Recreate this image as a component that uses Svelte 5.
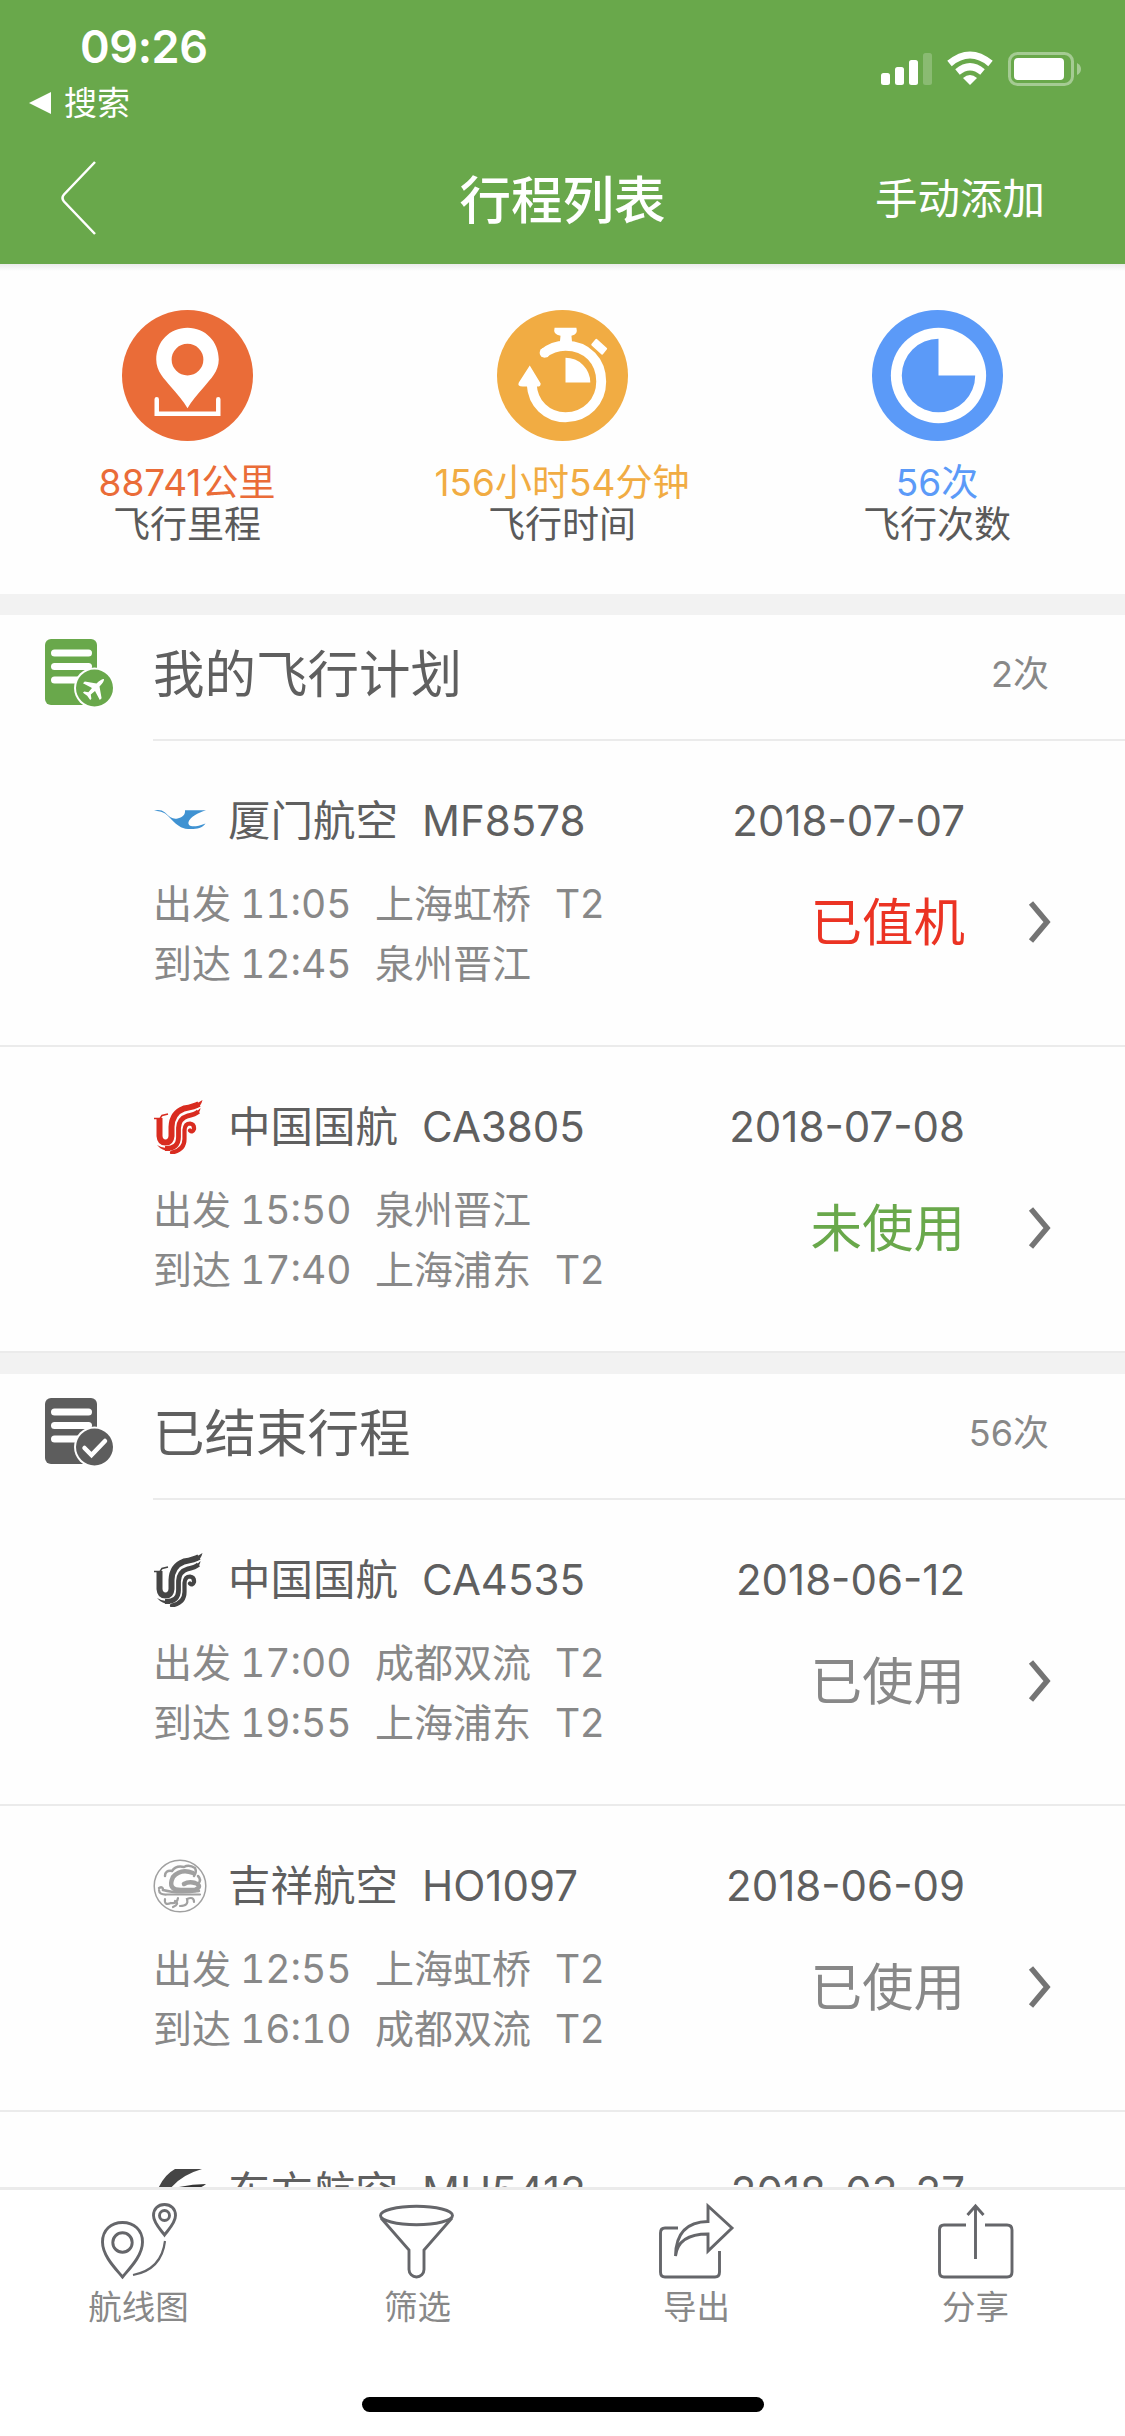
<script>
  const stats = [
    { kind: 'distance', value: '88741公里', label: '飞行里程' },
    { kind: 'time', value: '156小时54分钟', label: '飞行时间' },
    { kind: 'count', value: '56次', label: '飞行次数' }
  ];

  const sections = [
    {
      kind: 'plan',
      title: '我的飞行计划',
      count: '2次',
      flights: [
        {
          logo: 'xiamen', airline: '厦门航空', number: 'MF8578', date: '2018-07-07',
          from: ['11:05', '上海虹桥', 'T2'], to: ['12:45', '泉州晋江', ''],
          status: '已值机', tone: 'red'
        },
        {
          logo: 'airchina', airline: '中国国航', number: 'CA3805', date: '2018-07-08',
          from: ['15:50', '泉州晋江', ''], to: ['17:40', '上海浦东', 'T2'],
          status: '未使用', tone: 'green'
        }
      ]
    },
    {
      kind: 'done',
      title: '已结束行程',
      count: '56次',
      flights: [
        {
          logo: 'airchina', airline: '中国国航', number: 'CA4535', date: '2018-06-12',
          from: ['17:00', '成都双流', 'T2'], to: ['19:55', '上海浦东', 'T2'],
          status: '已使用', tone: 'grey'
        },
        {
          logo: 'juneyao', airline: '吉祥航空', number: 'HO1097', date: '2018-06-09',
          from: ['12:55', '上海虹桥', 'T2'], to: ['16:10', '成都双流', 'T2'],
          status: '已使用', tone: 'grey'
        },
        {
          logo: 'eastern', airline: '东方航空', number: 'MU5412', date: '2018-03-27',
          from: ['', '', ''], to: ['', '', ''],
          status: '', tone: 'grey'
        }
      ]
    }
  ];

  const tabs = [
    { kind: 'route', label: '航线图' },
    { kind: 'filter', label: '筛选' },
    { kind: 'export', label: '导出' },
    { kind: 'share', label: '分享' }
  ];
</script>

<div class="screen">
  <header>
    <div class="status">
      <div class="status-left">
        <div class="clock">09:26</div>
        <div class="return">
          <svg width="22" height="22" viewBox="0 0 22 22"><path d="M0 11 22 0V22Z" fill="#fff" /></svg>
          <span>搜索</span>
        </div>
      </div>
      <svg class="indicators" width="204" height="40" viewBox="0 0 204 40">
        <g fill="#fff">
          <rect x="1" y="23" width="9" height="12" rx="2.5" />
          <rect x="15" y="17" width="9" height="18" rx="2.5" />
          <rect x="29" y="10" width="9" height="25" rx="2.5" />
          <rect x="43" y="3" width="9" height="32" rx="2.5" opacity=".22" />
          <path d="M90 35 83 28Q90 22 97 28Z" />
          <rect x="134" y="8" width="50" height="22" rx="4" />
        </g>
        <g fill="none" stroke="#fff" stroke-width="7">
          <path d="M69.500 13.500Q90 -3.500 110.500 13.500" />
          <path d="M77.500 22Q90 11.500 102.500 22" />
        </g>
        <rect x="129.500" y="3.500" width="63" height="31" rx="8" fill="none" stroke="#fff" stroke-width="3" opacity=".4" />
        <path d="M197 13Q201 15 201 19T197 25Z" fill="#fff" opacity=".4" />
      </svg>
    </div>
    <nav>
      <svg class="back" width="40" height="76" viewBox="0 0 40 76">
        <path d="M36 2 5 34.500Q2 38 5 41.500L36 74" fill="none" stroke="#fff" stroke-width="2.500" />
      </svg>
      <h1>行程列表</h1>
      <span class="add">手动添加</span>
    </nav>
  </header>

  <main>
    <div class="stats">
      {#each stats as stat}
        <div class="stat {stat.kind}">
          <svg width="131" height="131" viewBox="0 0 132 132">
            <circle cx="66" cy="66" r="66" fill="currentColor" />
            {#if stat.kind === 'distance'}
              <path fill="#fff" fill-rule="evenodd" d="M66 18C48 18 34.500 32 34.500 50C34.500 62 43 70 49 77C56 85 62 92 66 99C70 92 76 85 83 77C89 70 97.500 62 97.500 50C97.500 32 84 18 66 18ZM66 34A16 16 0 1 1 66 66A16 16 0 1 1 66 34Z" />
              <path d="M35 90V104.500H97V90" fill="none" stroke="#fff" stroke-width="4.500" stroke-linecap="round" />
            {:else if stat.kind === 'time'}
              <path d="M35 75C36 94 50 108 69 108C90 108 105 92 105 72C105 52 91 36 69 36Q56 36 47 44" fill="none" stroke="#fff" stroke-width="10" />
              <circle cx="48" cy="43" r="5" fill="#fff" />
              <path d="M69 48A25 25 0 0 1 94 73H69Z" fill="#fff" />
              <path d="M58 18H80Q82 25 75 26L76 36H63L64 26Q56 25 58 18Z" fill="#fff" />
              <path d="M33 56 44 74Q44 78 39 77H26Q20 77 22 73Z" fill="#fff" />
              <path d="M100 30 110 39 106 44 96 35Z" fill="#fff" stroke="#fff" stroke-width="2" stroke-linejoin="round" />
            {:else}
              <circle cx="67" cy="66" r="48" fill="#fff" />
              <path d="M67 66H104A37 37 0 1 1 67 29Z" fill="currentColor" />
            {/if}
          </svg>
          <div class="value">{stat.value}</div>
          <div class="label">{stat.label}</div>
        </div>
      {/each}
    </div>

    {#each sections as section}
      <section class={section.kind}>
        <div class="section-head">
          <svg class="doc" width="70" height="68" viewBox="0 0 70 68">
            <rect width="52" height="66" rx="6" fill="currentColor" />
            <g stroke="#fff" stroke-width="7" stroke-linecap="round">
              <path d="M9.500 14H43.500" />
              <path d="M9.500 27.500H43.500" />
              <path d="M9.500 41H38" />
            </g>
            <circle cx="49.500" cy="49" r="20.500" fill="#fff" />
            <circle cx="49.500" cy="49" r="18.500" fill="currentColor" />
            {#if section.kind === 'plan'}
              <path transform="translate(50 49) rotate(45) scale(.85)" fill="#fff" d="M0 -15Q2.500 -13 2.500 -5L14 3V6L2.500 2.500 2 9 6 12V14L0 13 -6 14V12L-2 9 -2.500 2.500 -14 6V3L-2.500 -5Q-2.500 -13 0 -15Z" />
            {:else}
              <path d="M39.500 50 46.500 57 60 43" fill="none" stroke="#fff" stroke-width="4.500" stroke-linecap="round" />
            {/if}
          </svg>
          <h2>{section.title}</h2>
          <span class="total">{section.count}</span>
        </div>

        {#each section.flights as flight}
          <article>
            <div class="info">
              <div class="carrier">
                <svg class="logo" width="54" height="54" viewBox="0 0 54 54">
                  {#if flight.logo === 'xiamen'}
                    <path fill="#3f92d2" d="M1 16.500C5 15.500 9 15.800 12 18.500C17 23.500 20 25.500 24.500 24.500C29 23.500 32.500 21 32 16.300H53C45 19 37 23 35.500 28C34.500 33 41 34 52.500 29.500C49 34.500 42 35.500 35 35C21 34 17 19 7 17.500Q4 16.800 1 16.500Z" />
                  {:else if flight.logo === 'airchina'}
                    <g fill="none" stroke="currentColor">
                      <path d="M6.500 18V36Q7 42.500 12.500 42.500T18.500 36V27Q19 13 31 8.500Q42 6.500 46 4" stroke-width="6" />
                      <path d="M12 48.500Q25.500 49 25.500 37V28Q26 18.500 35 15.800Q42 14.500 45.500 11.500" stroke-width="4.800" />
                      <path d="M19 52.500Q31.500 50 31.500 39V30Q32 23.500 37 23.500Q41.500 24 41 29Q39.500 33 37 30.500" stroke-width="4.200" stroke-linecap="round" />
                      <path d="M1 18.500H7L9 15.500 15 14" stroke-width="1.500" />
                    </g>
                    <path fill="currentColor" d="M40 4Q46 3 49.500 0Q48 6 44 8ZM41 12.500Q45 11 47.500 8Q47 13 43 15ZM4 45Q10 49 17 48V51Q9 51 4 45Z" />
                  {:else if flight.logo === 'juneyao'}
                    <g fill="none" stroke="#a0a0a0" stroke-linecap="round">
                      <circle cx="27" cy="27" r="25.800" stroke-width="1.500" />
                      <path d="M40 14Q28 9 20 18Q14 31 28 31H42Q50 27 42 24Q36 22 31 25" stroke-width="4.500" />
                      <path d="M12 17Q12 11 19 12Q23 6 31 8Q36 5 42 9Q44 13 41 17M45 17Q49 21 45 25M6 29Q10 27 10 31Q24 35 46 32" stroke-width="2.500" />
                      <path d="M6 31Q6 36 14 35.500H47M12 40Q11 47 18 44Q24 45 25 39M27 47Q36 47 34 40Q41 37 41 43M20 48Q27 45 22 42" stroke-width="2.200" />
                    </g>
                  {:else}
                    <path fill="#454545" d="M22 4H49Q28 10 17 24H5Q11 10 22 4Z" />
                    <path fill="#333" d="M26 22Q40 19 53 19Q48 24 27 28Z" />
                  {/if}
                </svg>
                <span class="airline">{flight.airline}</span>
                <span class="number">{flight.number}</span>
              </div>
              {#if flight.status}
                <div class="leg"><span>出发</span><span class="hour">{flight.from[0]}</span><span>{flight.from[1]}</span><span>{flight.from[2]}</span></div>
                <div class="leg"><span>到达</span><span class="hour">{flight.to[0]}</span><span>{flight.to[1]}</span><span>{flight.to[2]}</span></div>
              {/if}
            </div>
            <div class="state">
              <div class="date">{flight.date}</div>
              <div class="badge {flight.tone}">{flight.status}</div>
            </div>
            <svg class="chevron" width="24" height="42" viewBox="0 0 24 42">
              <path d="M3 2 19 21 3 40" fill="none" stroke="#747474" stroke-width="5.500" />
            </svg>
          </article>
        {/each}
      </section>
    {/each}
  </main>

  <footer>
    <div class="tabs">
      {#each tabs as tab}
        <div class="tab">
          <svg width="78" height="78" viewBox="0 0 78 78" fill="none" stroke="#65666a" stroke-width="2.900">
            {#if tab.kind === 'route'}
              <path d="M22.500 75C16 67 2.500 54 2.500 40C2.500 28 11 20.500 22.500 20.500S42.500 28 42.500 40C42.500 54 29 67 22.500 75Z" />
              <circle cx="22.500" cy="40.500" r="9.700" />
              <path d="M64.500 33C61 28 53.500 21 53.500 13.500C53.500 7 58 2.500 64.500 2.500S75.500 7 75.500 13.500C75.500 21 68 28 64.500 33Z" />
              <circle cx="64.500" cy="13.500" r="5" />
              <path d="M65 39C63 56 54 69 33 73" stroke-width="2.200" />
            {:else if tab.kind === 'filter'}
              <ellipse cx="37.500" cy="13.500" rx="36" ry="9.200" />
              <path d="M2 16 30 48V67.500A7.500 7.500 0 0 0 45 67.500V48L73 16" />
            {:else if tab.kind === 'export'}
              <path d="M20 26H7Q2.500 26 2.500 31V70Q2.500 75 7 75H57Q61.500 75 61.500 70V49" />
              <path d="M50 4V19.500Q18 20 17.500 54Q20 32 50 32V49L74 26Z" />
            {:else}
              <path d="M29 23H7Q2.500 23 2.500 28V70Q2.500 75 7 75H70Q75 75 75 70V28Q75 23 70 23H48" />
              <path d="M38.500 57V4M30.500 13 38.500 4 46.500 13" />
            {/if}
          </svg>
          <span>{tab.label}</span>
        </div>
      {/each}
    </div>
    <div class="home"></div>
  </footer>
</div>

<style>
  :global(body) {
    background: #fff;
  }

  .screen {
    display: flex;
    flex-direction: column;
    width: 1125px;
    height: 2436px;
    overflow: hidden;
    background: #fefefe;
    color: #5f5f5f;
    font-family: Inter, 'Noto Sans CJK SC', sans-serif;
    font-weight: 399;
  }

  header {
    flex: none;
    height: 264px;
    box-sizing: border-box;
    background: #69a84b;
    color: #fff;
  }

  .status {
    display: flex;
    justify-content: space-between;
    height: 132px;
    padding: 0 41px 0 29px;
  }

  .clock {
    padding: 22px 0 0 51px;
    font-size: 45px;
    font-weight: 600;
    line-height: 50px;
    letter-spacing: -0.4px;
  }

  .return {
    display: flex;
    align-items: center;
    gap: 13px;
    margin-top: 12px;
    font-size: 33px;
    font-weight: 400;
    line-height: 38px;
  }

  .indicators {
    margin-top: 50px;
  }

  nav {
    display: grid;
    grid-template-columns: 1fr auto 1fr;
    align-items: center;
    height: 132px;
    padding: 0 80px 0 59px;
  }

  h1 {
    margin: 3px 0 0 21px;
    font-size: 51.500px;
    font-weight: 500;
    line-height: 60px;
  }

  .add {
    justify-self: end;
    margin-bottom: 5px;
    font-size: 42.500px;
  }

  main {
    flex: none;
    height: 1923px;
    overflow: hidden;
  }

  .stats {
    display: grid;
    grid-template-columns: repeat(3, 1fr);
    height: 330px;
    background: linear-gradient(#ebebeb, #fefefe 7px);
    font-size: 37px;
    line-height: 42px;
  }

  .stat {
    display: flex;
    flex-direction: column;
    align-items: center;
    padding: 46px 1px 0 0;
  }

  .stat .value {
    margin-top: 21px;
  }

  .stat .label {
    color: #5a5a5a;
  }

  .distance {
    color: #ea6c38;
  }

  .time {
    color: #f1ac43;
  }

  .count {
    color: #5b9af8;
  }

  section {
    border-top: 21px solid #f2f2f2;
  }

  .section-head {
    display: flex;
    align-items: center;
    height: 126px;
    box-sizing: border-box;
    margin-left: 153px;
    padding-right: 76px;
    border-bottom: 2px solid #ebebeb;
  }

  .doc {
    flex: none;
    margin: -8px 38px 0 -108px;
    color: #69a84b;
  }

  .done .doc {
    color: #5d5d5d;
  }

  h2 {
    flex: 1;
    margin: 0 0 7px;
    font-size: 51.500px;
    font-weight: 399;
    line-height: 60px;
  }

  .total {
    margin-bottom: 12px;
    color: #888;
    font-size: 36px;
  }

  article {
    display: flex;
    height: 306px;
    box-sizing: border-box;
    padding-left: 153px;
    border-bottom: 2px solid #ebebeb;
  }

  .info {
    width: 560px;
    padding-top: 50px;
  }

  .carrier {
    display: flex;
    align-items: center;
    height: 60px;
    margin-bottom: 23px;
    font-size: 42.500px;
    line-height: 60px;
  }

  .logo {
    color: #d92c20;
  }

  .done .logo {
    color: #444;
  }

  .airline {
    margin: 0 24px 0 21px;
  }

  .number {
    font-size: 42px;
  }

  .leg {
    display: grid;
    grid-template-columns: 87px 135px 180px auto;
    height: 60px;
    color: #888;
    font-size: 39px;
    line-height: 60px;
    white-space: nowrap;
  }

  .hour {
    font-variant-numeric: tabular-nums;
  }

  .state {
    width: 252px;
    padding-top: 50px;
    text-align: right;
  }

  .date {
    font-size: 42px;
    line-height: 60px;
    white-space: nowrap;
  }

  .badge {
    margin-top: 41px;
    font-size: 51.500px;
    line-height: 60px;
  }

  .red {
    color: #eb3323;
  }

  .green {
    color: #69a84b;
  }

  .grey {
    color: #888;
  }

  .chevron {
    margin: 160px 0 0 63px;
  }

  footer {
    flex: 1;
    background: #fff;
    border-top: 3px solid #ebebeb;
  }

  .tabs {
    display: grid;
    grid-template-columns: repeat(4, 279px);
    height: 207px;
  }

  .tab {
    display: flex;
    flex-direction: column;
    align-items: center;
    padding: 12px 2px 0 0;
    color: #888;
    font-size: 33.500px;
    line-height: 42px;
  }

  .tab span {
    margin-top: 6px;
  }

  .home {
    width: 402px;
    height: 15px;
    margin: 0 auto;
    border-radius: 8px;
    background: #000;
  }
</style>
